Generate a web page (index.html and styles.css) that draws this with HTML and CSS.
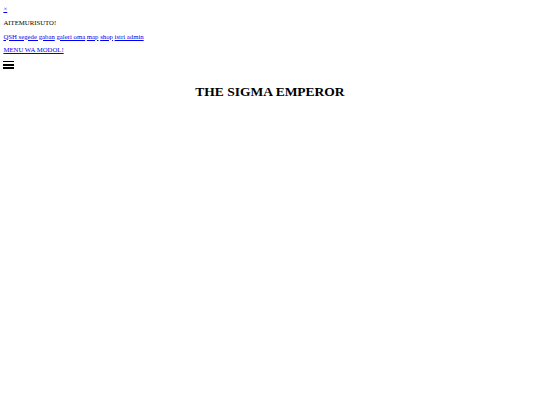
FILE: index.html
```html
<!DOCTYPE html>
<html>
<head>
<meta charset="utf-8">
<link rel="stylesheet" href="styles.css">
</head>
<body>
<div class="sidenav">
  <a href="#" class="close">&times;</a>
  <p class="title">AITEMURISUTO!</p>
  <p class="links"><a href="#">QSH segede gaban</a> <a href="#">galeri oma</a> <a href="#">map</a> <a href="#">shop</a> <a href="#">istri admin</a></p>
  <p class="menu"><a href="#">MENU WA MODOL!</a></p>
</div>
<div class="burger"><span></span><span></span><span></span></div>
<h1 class="heading">THE SIGMA EMPEROR</h1>
</body>
</html>
```
FILE: styles.css
```css
html, body { margin: 0; padding: 0; background: #fff; }
body {
  margin: 5px 3.4px 3.4px;
  font-family: "Liberation Serif", "Times New Roman", serif;
  font-size: 6.75px;
  color: #000;
}
a { color: #0000ee; }
.sidenav p { margin: 6.75px 0; }
.close { display: inline-block; }
.burger { display: flex; flex-direction: column; gap: 1.5px; width: 10.5px; padding-top: 0.5px; padding-bottom: 6.5px; }
.burger span { display: block; height: 1.8px; background: #000; }
.heading { text-align: center; font-size: 13.5px; margin: 9px 0; }
```
